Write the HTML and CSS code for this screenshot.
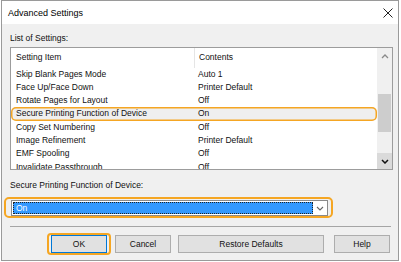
FILE: index.html
```html
<!DOCTYPE html>
<html lang="en">
<head>
  <meta charset="UTF-8" />
  <title>Advanced Settings</title>
  <link rel="stylesheet" href="styles.css">
</head>
<body>
<div class="window">
  <div class="titlebar">
    <span class="title">Advanced Settings</span>
    <svg class="close" width="10" height="10" viewBox="0 0 10 10">
      <path d="M0.5 0.5 L9.5 9.5 M9.5 0.5 L0.5 9.5" stroke="#222" stroke-width="1" fill="none"/>
    </svg>
  </div>

  <div class="content">
    <div class="label">List of Settings:</div>

    <div class="list">
      <div class="table">
        <div class="row head">
          <span class="c1">Setting Item</span>
          <span class="c2">Contents</span>
        </div>
        <div class="row"><span class="c1">Skip Blank Pages Mode</span><span class="c2">Auto 1</span></div>
        <div class="row"><span class="c1">Face Up/Face Down</span><span class="c2">Printer Default</span></div>
        <div class="row"><span class="c1">Rotate Pages for Layout</span><span class="c2">Off</span></div>
        <div class="row selected"><span class="c1">Secure Printing Function of Device</span><span class="c2">On</span></div>
        <div class="row"><span class="c1">Copy Set Numbering</span><span class="c2">Off</span></div>
        <div class="row"><span class="c1">Image Refinement</span><span class="c2">Printer Default</span></div>
        <div class="row"><span class="c1">EMF Spooling</span><span class="c2">Off</span></div>
        <div class="row"><span class="c1">Invalidate Passthrough</span><span class="c2">Off</span></div>
      </div>
      <div class="scrollbar">
        <div class="arrow up">
          <svg width="8" height="5" viewBox="0 0 8 5"><path d="M1 4 L4 1 L7 4" stroke="#8a8a8a" stroke-width="1.3" fill="none"/></svg>
        </div>
        <div class="track"><div class="thumb"></div></div>
        <div class="arrow down">
          <svg width="8" height="5" viewBox="0 0 8 5"><path d="M1 1 L4 4 L7 1" stroke="#111" stroke-width="1.5" fill="none"/></svg>
        </div>
      </div>
    </div>

    <div class="label label-combo">Secure Printing Function of Device:</div>

    <div class="combo-ring">
      <div class="combo">
        <span class="combo-value">On</span>
        <span class="combo-arrow">
          <svg width="8" height="5" viewBox="0 0 8 5"><path d="M1 1 L4 4 L7 1" stroke="#666" stroke-width="1.1" fill="none"/></svg>
        </span>
      </div>
    </div>

    <div class="separator"></div>

    <div class="buttons">
      <span class="btn-ring"><button class="btn default">OK</button></span>
      <button class="btn cancel">Cancel</button>
      <button class="btn wide">Restore Defaults</button>
      <button class="btn help">Help</button>
    </div>
  </div>
</div>
</body>
</html>
```

FILE: styles.css
```css
body {
  margin: 0;
  font-family: "Liberation Sans", Arial, sans-serif;
  font-size: 8.5px;
  color: #111;
  background: #fff;
}

.window {
  margin-left: 1px;
  width: 398px;
  height: 261px;
  box-sizing: border-box;
  border: 1px solid #9a9a9a;
  background-color: #f0f0f0;
}

.titlebar {
  height: 23px;
  background-color: #fff;
  display: flex;
  align-items: center;
  padding-left: 6px;
}

.title {
  font-size: 9px;
  color: #000;
}

.close {
  margin-left: auto;
  margin-right: 5px;
}

.content {
  padding: 9px 5px 0 8px;
}

.label {
  line-height: 11px;
  height: 11px;
}

.list {
  margin-top: 3px;
  height: 123px;
  box-sizing: border-box;
  border: 1px solid #9c9c9c;
  background-color: #fff;
  display: flex;
}

.table {
  flex: 1;
  overflow: hidden;
}

.row {
  display: flex;
  height: 13.33px;
  line-height: 13.33px;
  white-space: nowrap;
}

.row .c1 {
  width: 184px;
  padding-left: 5px;
  box-sizing: border-box;
}

.row .c2 {
  padding-left: 3px;
}

.row.head {
  height: 19.5px;
  line-height: 19.5px;
}

.row.head .c1 {
  border-right: 1px solid #e5e5e5;
}

.row.head .c2 {
  padding-left: 4px;
}

.row.selected {
  background-color: #efefef;
  border-radius: 5px;
  box-shadow: inset 0 0 0 1.5px #f5a623;
}

.scrollbar {
  width: 15px;
  background-color: #f0f0f0;
  display: flex;
  flex-direction: column;
}

.arrow {
  display: flex;
  align-items: center;
  justify-content: center;
}

.arrow.up {
  height: 17px;
}

.arrow.down {
  height: 16px;
  background-color: #dadada;
}

.track {
  height: 88px;
}

.thumb {
  margin: 29px 1px 0 1px;
  height: 38px;
  background-color: #cdcdcd;
}

.label-combo {
  margin-top: 9.5px;
}

.combo-ring {
  margin: 6.5px 0 0 -6px;
  width: 329px;
  box-sizing: border-box;
  border: 2px solid #f5a623;
  border-radius: 5px;
  padding: 1px 3px 0 5px;
}

.combo {
  height: 16px;
  box-sizing: border-box;
  border: 1px solid #8a8a8a;
  background-color: #fff;
  padding: 1px 0 1px 1px;
  display: flex;
}

.combo-value {
  flex: 1;
  background-color: #3399ff;
  border: 1px dotted #222;
  color: #fff;
  padding-left: 2px;
  line-height: 10px;
}

.combo-arrow {
  width: 14px;
  display: flex;
  align-items: center;
  justify-content: center;
}

.separator {
  margin: 8px 2px 0 0;
  height: 1px;
  background-color: #a5a5a5;
}

.buttons {
  margin-top: 6px;
  display: flex;
  align-items: center;
}

.btn {
  height: 18px;
  width: 56px;
  padding: 0;
  box-sizing: border-box;
  border: 1px solid #adadad;
  background-color: #e1e1e1;
  font-family: "Liberation Sans", Arial, sans-serif;
  font-size: 8.5px;
  color: #111;
}

.btn.default {
  display: block;
  border-color: #0078d7;
}

.btn-ring {
  margin-left: 37px;
  padding: 0 2px;
  border: 2px solid #f5a623;
  border-radius: 4px;
}

.btn.cancel {
  margin-left: 4px;
}

.btn.wide {
  margin-left: 7px;
  width: 146px;
}

.btn.help {
  margin-left: 10px;
}
```
